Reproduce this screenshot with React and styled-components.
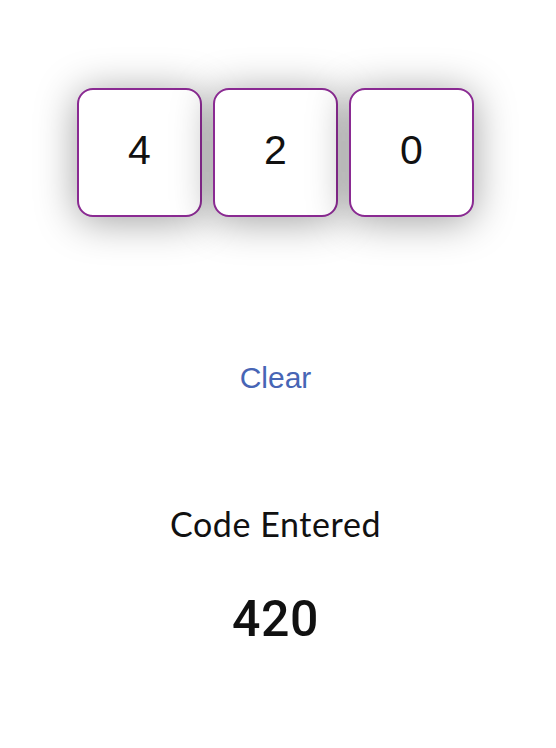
import React from "react";
import styled, { createGlobalStyle } from "styled-components";

const Global = createGlobalStyle`
  html, body { margin: 0; padding: 0; background: #fff; }
  body { font-family: "Liberation Sans", Arial, sans-serif; }
`;

const Page = styled.div`
  width: 551px;
  height: 748px;
  display: flex;
  flex-direction: column;
  align-items: center;
  padding-top: 88px;
  box-sizing: border-box;
`;

const Row = styled.div`
  display: flex;
  gap: 11px;
`;

const Cell = styled.div`
  width: 125px;
  height: 129px;
  box-sizing: border-box;
  border: 2px solid #8a2a92;
  border-radius: 16px;
  background: #fff;
  box-shadow: 0 4px 40px rgba(0, 0, 0, 0.38);
  display: flex;
  align-items: center;
  justify-content: center;
  font-family: "Liberation Sans", Arial, sans-serif;
  font-weight: 400;
  font-size: 41px;
  color: #111;
  padding-bottom: 4px;
`;

const ClearButton = styled.button`
  margin-top: 144px;
  background: none;
  border: none;
  padding: 0;
  font-family: "Liberation Sans", Arial, sans-serif;
  font-size: 30px;
  color: #4765b5;
  cursor: pointer;
`;

const Label = styled.div`
  margin-top: 108px;
  font-family: Lato, "Noto Sans", sans-serif;
  font-size: 34px;
  letter-spacing: 0.6px;
  color: #111;
`;

const Code = styled.div`
  margin-top: 46px;
  font-family: Roboto, "Liberation Sans", sans-serif;
  font-weight: 500;
  font-size: 50px;
  letter-spacing: 0.5px;
  color: #111;
`;

export default function App() {
  const digits = ["4", "2", "0"];
  return (
    <>
      <Global />
      <Page>
        <Row>
          {digits.map((d, i) => (
            <Cell key={i}>{d}</Cell>
          ))}
        </Row>
        <ClearButton>Clear</ClearButton>
        <Label>Code Entered</Label>
        <Code>{digits.join("")}</Code>
      </Page>
    </>
  );
}
